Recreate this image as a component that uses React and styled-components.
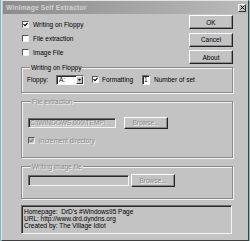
import styled, { createGlobalStyle } from 'styled-components'

const GlobalStyle = createGlobalStyle`
  html, body { margin: 0; padding: 0; background: #7fb8b8; }
  body { font-family: "Liberation Sans", Arial, sans-serif; font-size: 6.5px; color: #000; }
  #root { width: 250px; height: 241px; overflow: hidden; }
`

const Window = styled.div`
  box-sizing: border-box;
  margin-left: 1px;
  width: 248px;
  height: 241px;
  background: #c3c3c3;
  border-top: 1px solid #e4e4e4;
  border-left: 1px solid #e4e4e4;
  border-right: 1px solid #404040;
  border-bottom: 1px solid #404040;
  display: flex;
  flex-direction: column;
`

const TitleBar = styled.div`
  height: 13px;
  margin: 0 0 0 1px;
  padding: 0 2px 0 3px;
  display: flex;
  align-items: center;
  justify-content: space-between;
  background: linear-gradient(to right, #8c8c8c, #bababa);
`

const Title = styled.span`
  font-weight: bold;
  font-size: 6.8px;
  color: #d2d2d2;
  letter-spacing: 0.1px;
`

const CloseBtn = styled.span`
  box-sizing: border-box;
  width: 8px;
  height: 8px;
  display: flex;
  align-items: center;
  justify-content: center;
  background: #c3c3c3;
  border-top: 1px solid #fff;
  border-left: 1px solid #fff;
  border-right: 1px solid #303030;
  border-bottom: 1px solid #303030;
`

const Body = styled.div`
  padding: 1px 15px 0 19px;
  display: flex;
  flex-direction: column;
`

const TopRow = styled.div`
  height: 49px;
  display: flex;
  justify-content: space-between;
`

const Options = styled.div`
  padding: 1px 0 0 1px;
  display: flex;
  flex-direction: column;
`

const CheckRow = styled.label`
  display: flex;
  align-items: center;
  height: ${p => p.$h || 14}px;
  color: ${p => (p.$disabled ? '#8a8a8a' : '#000')};
  text-shadow: ${p => (p.$disabled ? '1px 1px 0 #f4f4f4' : 'none')};
  white-space: nowrap;
`

const Box = styled.span`
  box-sizing: border-box;
  width: 7px;
  height: 7px;
  margin-right: 4px;
  display: inline-flex;
  align-items: center;
  justify-content: center;
  background: ${p => (p.$disabled ? '#c3c3c3' : '#fff')};
  border-top: 1px solid #555;
  border-left: 1px solid #555;
  border-right: 1px solid #eee;
  border-bottom: 1px solid #eee;
  flex-shrink: 0;
`

const Buttons = styled.div`
  width: 44px;
  display: flex;
  flex-direction: column;
  gap: 3.5px;
`

const Button = styled.div`
  box-sizing: border-box;
  width: ${p => p.$w || 44}px;
  height: ${p => p.$h || 14}px;
  display: flex;
  align-items: center;
  justify-content: center;
  background: #c3c3c3;
  border-top: 1px solid #fff;
  border-left: 1px solid #fff;
  border-right: 1px solid #222;
  border-bottom: 1px solid #222;
  box-shadow: inset -1px -1px 0 #8a8a8a;
  color: ${p => (p.$disabled ? '#8a8a8a' : '#000')};
  text-shadow: ${p => (p.$disabled ? '1px 1px 0 #f4f4f4' : 'none')};
  flex-shrink: 0;
`

const Group = styled.fieldset`
  box-sizing: border-box;
  width: 212px;
  margin: ${p => p.$mt || 0}px 0 0;
  padding: ${p => p.$pad};
  border: 1px solid #8a8a8a;
  box-shadow: 1px 1px 0 #f4f4f4, inset 1px 1px 0 #f4f4f4;
  min-inline-size: 0;
`

const Legend = styled.legend`
  margin-left: 3px;
  padding: 0 1px;
  line-height: 7px;
  background: #c3c3c3;
  color: ${p => (p.$disabled ? '#8a8a8a' : '#000')};
  text-shadow: ${p => (p.$disabled ? '1px 1px 0 #f4f4f4' : 'none')};
`

const Row = styled.div`
  display: flex;
  align-items: center;
  height: ${p => p.$h}px;
  margin-top: ${p => p.$mt || 0}px;
`

const FieldLabel = styled.span`
  width: ${p => p.$w}px;
  flex-shrink: 0;
  white-space: nowrap;
`

const Sunken = styled.div`
  box-sizing: border-box;
  width: ${p => p.$w}px;
  height: ${p => p.$h}px;
  margin-right: ${p => p.$mr || 0}px;
  display: flex;
  align-items: center;
  padding-left: 1px;
  background: ${p => (p.$disabled ? '#c3c3c3' : '#fff')};
  border-top: 1px solid #6a6a6a;
  border-left: 1px solid #6a6a6a;
  border-right: 1px solid #f4f4f4;
  border-bottom: 1px solid #f4f4f4;
  box-shadow: inset 1px 1px 0 #2a2a2a;
  color: ${p => (p.$disabled ? '#8a8a8a' : '#000')};
  text-shadow: ${p => (p.$disabled ? '1px 1px 0 #f4f4f4' : 'none')};
  white-space: nowrap;
  overflow: hidden;
  flex-shrink: 0;
`

const SelectValue = styled.span`
  flex: 1;
  padding-left: 1px;
`

const DropArrow = styled.span`
  box-sizing: border-box;
  width: 7px;
  height: 100%;
  display: flex;
  align-items: center;
  justify-content: center;
  background: #c3c3c3;
  border-top: 1px solid #fff;
  border-left: 1px solid #fff;
  border-right: 1px solid #333;
  border-bottom: 1px solid #333;
`

const InfoBox = styled.div`
  box-sizing: border-box;
  width: 211px;
  height: 29px;
  margin-top: 6px;
  padding: 2.5px 2px 0;
  background: #c3c3c3;
  border-top: 1px solid #6a6a6a;
  border-left: 1px solid #6a6a6a;
  border-right: 1px solid #f4f4f4;
  border-bottom: 1px solid #f4f4f4;
  box-shadow: inset 1px 1px 0 #2a2a2a;
  line-height: 7px;
  white-space: nowrap;
`

const Tick = ({ color = '#000' }) => (
  <svg width="5" height="5" viewBox="0 0 5 5">
    <path d="M0.5 2.2 L2 3.7 L4.6 0.8" stroke={color} strokeWidth="1.1" fill="none" />
  </svg>
)

const Check = ({ checked, disabled }) => (
  <Box $disabled={disabled}>{checked && <Tick color={disabled ? '#7a7a7a' : '#000'} />}</Box>
)

export default function App() {
  return (
    <>
      <GlobalStyle />
      <Window>
        <TitleBar>
          <Title>WinImage Self Extractor</Title>
          <CloseBtn>
            <svg width="5" height="5" viewBox="0 0 5 5">
              <path d="M0.5 0.5 L4.5 4.5 M4.5 0.5 L0.5 4.5" stroke="#000" strokeWidth="1" />
            </svg>
          </CloseBtn>
        </TitleBar>
        <Body>
          <TopRow>
            <Options>
              <CheckRow style={{ marginTop: 1 }}><Check checked />Writing on Floppy</CheckRow>
              <CheckRow><Check />File extraction</CheckRow>
              <CheckRow><Check />Image File</CheckRow>
            </Options>
            <Buttons>
              <Button>OK</Button>
              <Button>Cancel</Button>
              <Button>About</Button>
            </Buttons>
          </TopRow>

          <Group $pad="3.5px 4px 7px 5px">
            <Legend>Writing on Floppy</Legend>
            <Row $h={10}>
              <FieldLabel $w={29}>Floppy:</FieldLabel>
              <Sunken $w={28} $h={10} $mr={8}>
                <SelectValue>A:</SelectValue>
                <DropArrow>
                  <svg width="3" height="2" viewBox="0 0 3 2"><path d="M0 0 H3 L1.5 2 Z" fill="#000" /></svg>
                </DropArrow>
              </Sunken>
              <CheckRow $h={10}><Check checked /></CheckRow>
              <FieldLabel $w={40} style={{ marginLeft: -1 }}>Formatting</FieldLabel>
              <Sunken $w={8} $h={10} $mr={4}>1</Sunken>
              <FieldLabel>Number of set</FieldLabel>
            </Row>
          </Group>

          <Group $mt={5.5} $pad="11.5px 4px 12px 6px">
            <Legend $disabled>File extraction</Legend>
            <Row $h={12}>
              <Sunken $w={88} $h={10} $mr={8} $disabled>C:\WINDOWS.000\TEMP\</Sunken>
              <Button $w={44} $h={12} $disabled>Browse...</Button>
            </Row>
            <Row $h={9} $mt={7}>
              <CheckRow $h={9} $disabled><Check checked disabled />Increment directory</CheckRow>
            </Row>
          </Group>

          <Group $mt={5.5} $pad="4px 4px 10.5px 6px">
            <Legend $disabled>Writing image file</Legend>
            <Row $h={13}>
              <Sunken $w={101} $h={11} $mr={2} $disabled />
              <Button $w={44} $h={13} $disabled>Browse...</Button>
            </Row>
          </Group>

          <InfoBox>
            Homepage:&nbsp; DrD's #Windows95 Page<br />
            URL: http://www.drd.dyndns.org<br />
            Created by: The Village Idiot
          </InfoBox>
        </Body>
      </Window>
    </>
  )
}
